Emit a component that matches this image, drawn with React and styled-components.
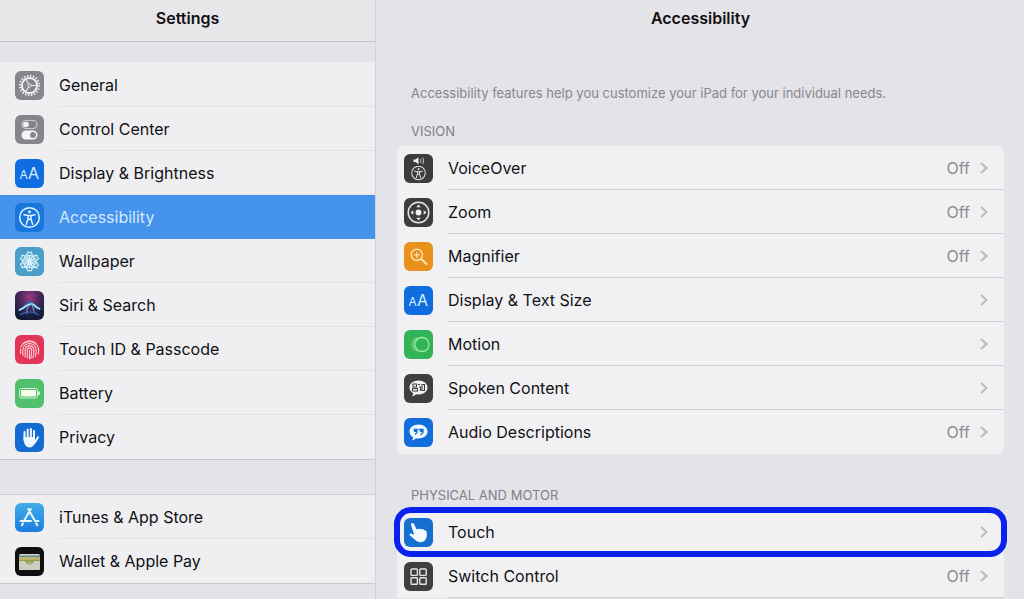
import React, { useState } from 'react'
import styled, { createGlobalStyle } from 'styled-components'


const GlobalStyle = createGlobalStyle`
  * {
    box-sizing: border-box;
  }

  body {
    margin: 0;
    background: #e4e3e8;
    color: #111114;
    font-family: Inter, 'Liberation Sans', sans-serif;
    font-size: 16px;
    line-height: 20px;
  }
`;

const Page = styled.div`
  display: grid;
  grid-template-columns: 376px 1fr;
  min-height: 100vh;
`;

const Sidebar = styled.nav`
  background: #e4e3e7;
  border-right: 1px solid #d2d2d6;
`;

const SidebarHeader = styled.header`
  height: 42px;
  padding-top: 8px;
  background: #e7e7e9;
  border-bottom: 1px solid #c4c4c8;
`;

const Title = styled.h1`
  margin: 0;
  font-size: 16px;
  line-height: 20px;
  font-weight: 600;
  text-align: center;
`;

const SidebarGroup = styled.ul`
  list-style: none;
  margin: 0;
  margin-top: ${(props) => props.$gap}px;
  padding: 0;
  background: #efeff2;
  border-top: 1px solid ${(props) => (props.$topLine ? '#cfcfd3' : '#efeff2')};
  border-bottom: 1px solid #c9c9cd;
`;

const SidebarRow = styled.a`
  display: flex;
  align-items: center;
  gap: 15px;
  height: 44px;
  padding-left: 15px;
  color: ${(props) => (props.$selected ? '#d3e9ff' : '#111114')};
  background: ${(props) => (props.$selected ? '#4593ec' : 'transparent')};
  text-decoration: none;
`;

const SidebarLabel = styled.span`
  flex: 1;
  display: flex;
  align-items: center;
  height: 44px;
  border-bottom: 1px solid ${(props) => (props.$line ? '#e2e2e6' : 'transparent')};
`;

const Main = styled.main`
  padding: 8px 20px 0 21px;
`;

const Intro = styled.p`
  margin: 57px 0 0 14px;
  font-size: 13px;
  line-height: 16px;
  color: #87878c;
`;

const SectionTitle = styled.h2`
  margin: ${(props) => props.$gap}px 0 7px 14px;
  font-size: 13px;
  line-height: 16px;
  font-weight: 400;
  color: #808085;
`;

const Card = styled.ul`
  list-style: none;
  margin: 0;
  padding: 0;
  background: #f1f1f4;
  border-radius: ${(props) => (props.$open ? '6px 6px 0 0' : '6px')};
`;

const CardRow = styled.a`
  display: flex;
  align-items: center;
  gap: 15px;
  height: 44px;
  padding-left: 7px;
  color: #111114;
  text-decoration: none;
  border-radius: 14px;
  outline: ${(props) => (props.$marked ? '6px solid #0a22ee' : 'none')};
  outline-offset: -3px;
`;

const CardBody = styled.span`
  flex: 1;
  display: flex;
  align-items: center;
  gap: 8px;
  height: 44px;
  padding-right: 14px;
  border-bottom: 1px solid ${(props) => (props.$line ? '#d0d0d4' : 'transparent')};
`;

const CardLabel = styled.span`
  flex: 1;
`;

const Value = styled.span`
  color: #8c8c91;
`;

const Tile = styled.svg`
  display: block;
  flex: none;
  width: 29px;
  height: 29px;
  border-radius: 6px;
  background: ${(props) => props.$bg};
`;

const Arrow = styled.svg`
  flex: none;
  width: 12px;
  height: 14px;
  fill: none;
  stroke: #b9b9be;
  stroke-width: 2;
`;

const Chevron = () => (
  <Arrow viewBox="0 0 12 14" aria-hidden="true">
    <path d="M3 2l5.500 5-5.500 5" />
  </Arrow>
)

const Person = ({ stroke }) => (
  <g fill="none" stroke={stroke} strokeWidth="1.500" strokeLinecap="round" strokeLinejoin="round">
    <circle cx="14.500" cy="14.500" r="9.800" />
    <circle cx="14.500" cy="8.800" r="1.100" fill={stroke} strokeWidth="0.800" />
    <path d="M9 11.800l4 .8v3.600l-1.700 5M20 11.800l-4 .8v3.600l1.700 5M13 12.600h3M13 16.200h3" />
  </g>
)

const Letters = () => (
  <g fill="#d9efff" fontFamily="Inter, sans-serif">
    <text x="4.500" y="19.500" fontSize="12">A</text>
    <text x="13" y="19.500" fontSize="16">A</text>
  </g>
)

const bubble = 'M14.500 6.500c5.200 0 9 3 9 7s-3.800 7-9 7c-.9 0-1.700-.1-2.500-.2-1 1-2.300 1.700-4 1.900.8-.9 1.200-1.800 1.200-3-2.300-1.200-3.700-3.300-3.700-5.700 0-4 3.800-7 9-7z'

const spokes = (count) => Array.from({ length: count }, (_, i) => (360 / count) * i)

const icons = {
  general: {
    bg: '#85858a',
    art: (
      <g fill="none" stroke="#f0f0f2">
        <circle cx="14.500" cy="14.500" r="7.600" strokeWidth="2" />
        <circle cx="14.500" cy="14.500" r="9.700" strokeWidth="2" strokeDasharray="1.500 1.550" />
        <circle cx="14.500" cy="14.500" r="1.600" strokeWidth="1" />
        <path d="M13.600 13L10.500 8M16.200 14.500h6M13.600 16l-3.100 5" strokeWidth="1.100" />
      </g>
    ),
  },
  control: {
    bg: '#85858a',
    art: (
      <g>
        <rect x="7" y="5.500" width="15" height="8" rx="4" fill="none" stroke="#c9c9cd" strokeWidth="1.200" />
        <circle cx="11" cy="9.500" r="2.800" fill="#f3f3f5" />
        <rect x="6.500" y="15.500" width="16" height="9" rx="4.500" fill="#f5f5f7" />
        <circle cx="18" cy="20" r="3" fill="#85858a" />
      </g>
    ),
  },
  letters: { bg: '#0f6de0', art: <Letters /> },
  person: { bg: '#1976dd', art: <Person stroke="#e2f4ff" /> },
  wallpaper: {
    bg: '#4a9fc9',
    art: (
      <g fill="none" stroke="#d8f4fb" strokeWidth="1.100">
        {spokes(6).map((angle) => (
          <g key={angle} transform={`rotate(${angle} 14.5 14.5)`}>
            <path d="M14.500 14.500c-3.200-3-3.500-6.500-1.600-9.500 1.100.8 2.100.8 3.200 0 1.900 3 1.600 6.500-1.600 9.500zM14.500 14V7.500" />
            <path d="M12 7.500l2.500 2 2.500-2" />
          </g>
        ))}
      </g>
    ),
  },
  siri: {
    bg: 'radial-gradient(circle at 50% 20%, #9a3a86 0%, #55295f 32%, #1b2344 65%, #0e1024 100%)',
    art: (
      <g fill="none">
        <path d="M2 20c6-2 8-10 13-10 4 0 6 5 12 8-4 1-7-1-10-3-5 0-8 5-15 5z" fill="#2a72b8" opacity="0.800" />
        <path d="M4 19c5-1 8-7 13-6 3 .6 4 4 8 5" stroke="#c9eaff" strokeWidth="1.400" />
        <path d="M17 13c-4 1-6 6-5 10M17 13c1 3 1 7 4 10" stroke="#68b4e0" />
        <path d="M5 24c6-4 13-4 19 0" stroke="#3266b0" strokeWidth="1.300" />
      </g>
    ),
  },
  touchId: {
    bg: '#e23657',
    art: (
      <g fill="none" stroke="#ffc9cf" strokeWidth="1.150" strokeLinecap="round">
        <path d="M8 8.500c3.800-3.600 9.200-3.600 13 0M5.900 12c3.400-7 13.800-7 17.200 0 .7 2 .8 4.400.2 7M5.700 18.500c-.4-1.600-.4-3 0-4.500" />
        <path d="M7.900 20.500v-5.700c0-8.300 13.200-8.300 13.200 0 .1 2.400 0 4.500-.8 6.700M10.100 22v-7c0-5.600 8.800-5.600 8.800 0 .1 2.800-.2 5.200-1 7.800" />
        <path d="M12.300 23v-8c0-2.900 4.400-2.900 4.400 0 .1 3.200-.2 5.700-.9 8.500M14.500 15v8.700" />
      </g>
    ),
  },
  battery: {
    bg: '#51c06c',
    art: (
      <g>
        <rect x="4.500" y="9.500" width="18" height="9.500" rx="2" fill="none" stroke="#d6f5d9" />
        <rect x="6" y="11" width="15" height="6.500" rx="1" fill="#f7fbe9" />
        <path d="M24 12.500v3.500" stroke="#e8f8dc" strokeWidth="1.600" />
      </g>
    ),
  },
  privacy: {
    bg: '#146bd2',
    art: (
      <g fill="none" stroke="#f0f9ff" strokeWidth="2" strokeLinecap="round">
        <path d="M9.500 9v8M12.700 6.500v9M15.900 6v9M19 8v8M23 14.300l-3 5" />
        <path d="M8.500 14h11.500v3.500l1.500-1.500c-1 4.500-3 8-6.500 8.500-4.500 0-6.500-4-6.500-10.500z" fill="#f0f9ff" stroke="none" />
      </g>
    ),
  },
  store: {
    bg: 'linear-gradient(#42aee9, #1c7cde)',
    art: (
      <g fill="none" stroke="#e4f7ff" strokeWidth="2" strokeLinecap="round">
        <path d="M13.200 6l6.800 12M15.800 6l-6.600 11.500M5.500 18h10.500M20 18h3.500M21.200 20.300l1 2M8 20.300l-1 2" />
      </g>
    ),
  },
  wallet: {
    bg: '#0f0f11',
    art: (
      <g>
        <rect x="4" y="7" width="21" height="16" rx="1.500" fill="#d7d4c6" />
        <path d="M4 8.500h21v2H4z" fill="#5d8f8d" />
        <path d="M4 10.500h21v2H4z" fill="#d1b55b" />
        <path d="M4 12.500h21v3H4z" fill="#8da446" />
        <path d="M4 14h6c1.500 0 2 3 4.500 3s3-3 4.500-3h6v8c0 .6-.4 1-1 1H5c-.6 0-1-.4-1-1z" fill="#cfcdbd" />
        <path d="M10 14.500c1.500 0 2 2.500 4.500 2.500s3-2.500 4.500-2.500" fill="none" stroke="#77785f" strokeWidth="0.800" />
      </g>
    ),
  },
  voiceOver: {
    bg: '#3c3c3f',
    art: (
      <g>
        <path d="M9.500 5.500h2l3-2.200v7l-3-2.200h-2z" fill="#f2f2f4" />
        <path d="M16.300 4.800c.9 1.200.9 2.800 0 4M18.500 3.600c1.500 2 1.500 4.400 0 6.400" fill="none" stroke="#cfcfd2" />
        <g transform="translate(4.500 9) scale(.69)">
          <Person stroke="#e1e1e4" />
        </g>
      </g>
    ),
  },
  zoom: {
    bg: '#3c3c3f',
    art: (
      <g fill="#f0f0f2">
        <circle cx="14.500" cy="14.500" r="10.300" fill="none" stroke="#e6e6e8" strokeWidth="1.500" />
        <circle cx="14.500" cy="14.500" r="2.900" />
        {spokes(4).map((angle) => (
          <path key={angle} d="M14.500 6.500l2.200 2.800h-4.400z" transform={`rotate(${angle} 14.5 14.5)`} />
        ))}
      </g>
    ),
  },
  magnifier: {
    bg: '#e8921d',
    art: (
      <g fill="none" stroke="#ffe3ae" strokeWidth="1.500" strokeLinecap="round">
        <circle cx="12.800" cy="12.800" r="5.600" />
        <path d="M10.300 12.800h5M12.800 10.300v5" strokeWidth="1.300" />
        <path d="M17 17l5.500 5" strokeWidth="2" />
      </g>
    ),
  },
  motion: {
    bg: '#33b357',
    art: (
      <g fill="none" stroke="#9fe9a6" strokeWidth="1.300">
        <circle cx="18" cy="14.500" r="7" />
        <path d="M14 7.800a7 7 0 0 0 0 13.400" opacity="0.700" />
        <path d="M10.500 8.500a7 7 0 0 0 0 12" opacity="0.350" strokeDasharray="1.500 1.500" />
      </g>
    ),
  },
  spoken: {
    bg: '#3f3f41',
    art: (
      <g>
        <path d={bubble} fill="#f2f2f4" />
        <g fill="none" stroke="#3f3f41" strokeWidth="1.100">
          <path d="M9 10h3.500v3H9zM8.500 14.500h5v2.500h-5zM14 10.500h2M15 13h1.500v4" />
          <path d="M18 10.500h2.500v6H18z" />
        </g>
      </g>
    ),
  },
  audio: {
    bg: '#126ddd',
    art: (
      <g>
        <path d={bubble} fill="#effaff" />
        <path d="M9.500 11.500h3.500v3l-2 2M14.500 11.500h4.500v3l-2.500 2.500" fill="none" stroke="#126ddd" strokeWidth="1.300" />
        <path d="M10 12h3v2h-3zM16 12h3v2h-3z" fill="#126ddd" />
      </g>
    ),
  },
  touch: {
    bg: '#1670cf',
    art: (
      <path
        d="M8 5.200c.9-.4 1.800.1 2.200 1l2.400 5.400c.9-1 2-1 2.800-.3.9-.7 1.900-.6 2.600.2 1-.5 1.900-.2 2.500.7 1.600-.2 2 .9 2.200 2.300.5 3.500.1 7-2.800 8.700-3.300 1.800-6.600.8-9-1.400L6 17.500c-.8-.9-.2-2.200 1.100-2l3.200 1.200L7.100 7.200c-.3-.9 0-1.700.9-2z"
        fill="#f2faff"
      />
    ),
  },
  switchControl: {
    bg: '#3f3f42',
    art: (
      <g fill="none" stroke="#e6e6e9" strokeWidth="1.400">
        <rect x="7" y="7" width="6.400" height="6.400" rx="0.800" />
        <rect x="15.800" y="7" width="6.400" height="6.400" rx="0.800" />
        <rect x="7" y="15.800" width="6.400" height="6.400" rx="0.800" />
        <rect x="15.800" y="15.800" width="6.400" height="6.400" rx="0.800" />
      </g>
    ),
  },
}

const Icon = ({ name }) => (
  <Tile viewBox="0 0 29 29" $bg={icons[name].bg} aria-hidden="true">
    {icons[name].art}
  </Tile>
)

const deviceItems = [
  { label: 'General', icon: 'general' },
  { label: 'Control Center', icon: 'control' },
  { label: 'Display & Brightness', icon: 'letters' },
  { label: 'Accessibility', icon: 'person' },
  { label: 'Wallpaper', icon: 'wallpaper' },
  { label: 'Siri & Search', icon: 'siri' },
  { label: 'Touch ID & Passcode', icon: 'touchId' },
  { label: 'Battery', icon: 'battery' },
  { label: 'Privacy', icon: 'privacy' },
]

const storeItems = [
  { label: 'iTunes & App Store', icon: 'store' },
  { label: 'Wallet & Apple Pay', icon: 'wallet' },
]

const visionItems = [
  { label: 'VoiceOver', icon: 'voiceOver', value: 'Off' },
  { label: 'Zoom', icon: 'zoom', value: 'Off' },
  { label: 'Magnifier', icon: 'magnifier', value: 'Off' },
  { label: 'Display & Text Size', icon: 'letters' },
  { label: 'Motion', icon: 'motion' },
  { label: 'Spoken Content', icon: 'spoken' },
  { label: 'Audio Descriptions', icon: 'audio', value: 'Off' },
]

const motorItems = [
  { label: 'Touch', icon: 'touch', marked: true },
  { label: 'Switch Control', icon: 'switchControl', value: 'Off' },
]

const App = () => {

  const [selected, setSelected] = useState('Accessibility')

  const renderSidebarRow = (item, index, list) => (
    <li key={item.label}>
      <SidebarRow
        href="#"
        $selected={item.label === selected}
        aria-current={item.label === selected ? 'page' : undefined}
        onClick={() => setSelected(item.label)}
      >
        <Icon name={item.icon} />
        <SidebarLabel $line={item.label !== selected && index < list.length - 1}>{item.label}</SidebarLabel>
      </SidebarRow>
    </li>
  )

  const renderCardRow = (item, line) => (
    <li key={item.label}>
      <CardRow href="#" $marked={item.marked}>
        <Icon name={item.icon} />
        <CardBody $line={line}>
          <CardLabel>{item.label}</CardLabel>
          {item.value && <Value>{item.value}</Value>}
          <Chevron />
        </CardBody>
      </CardRow>
    </li>
  )

  return (
    <>
      <GlobalStyle />
      <Page>
        <Sidebar>
          <SidebarHeader>
            <Title>Settings</Title>
          </SidebarHeader>
          <SidebarGroup $gap={20}>{deviceItems.map(renderSidebarRow)}</SidebarGroup>
          <SidebarGroup $gap={34} $topLine>{storeItems.map(renderSidebarRow)}</SidebarGroup>
        </Sidebar>

        <Main>
          <Title as="h2">Accessibility</Title>
          <Intro>Accessibility features help you customize your iPad for your individual needs.</Intro>
          <SectionTitle $gap={22}>VISION</SectionTitle>
          <Card>{visionItems.map((item, i) => renderCardRow(item, i < visionItems.length - 1))}</Card>
          <SectionTitle $gap={33}>PHYSICAL AND MOTOR</SectionTitle>
          <Card $open>{motorItems.map((item) => renderCardRow(item, !item.marked))}</Card>
        </Main>
      </Page>
    </>
  )
}

export default App
